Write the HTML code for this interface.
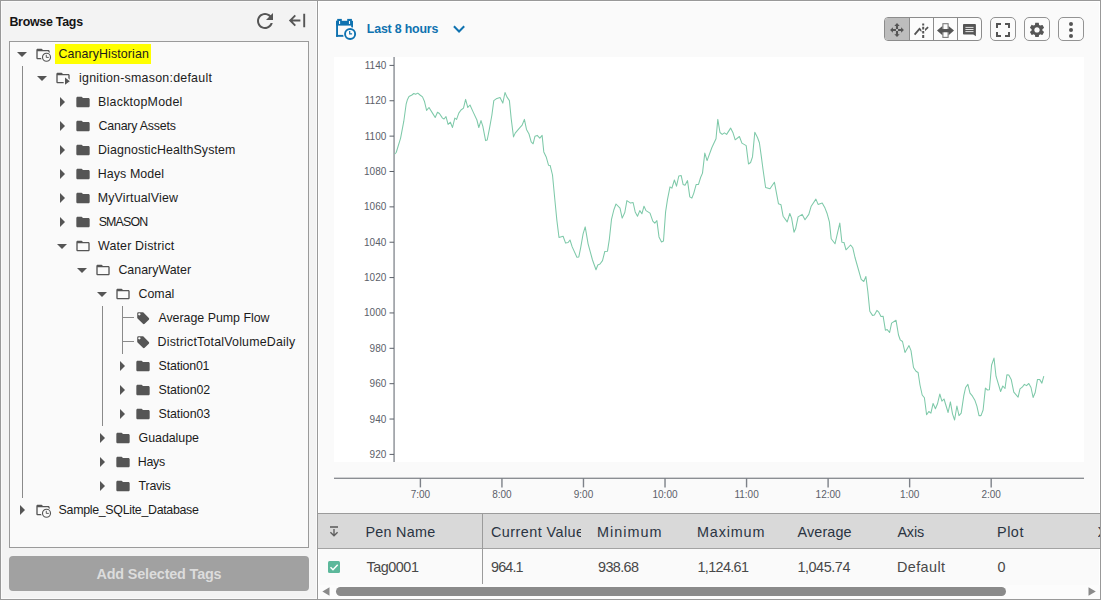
<!DOCTYPE html>
<html><head><meta charset="utf-8"><title>Browse Tags</title>
<style>
html,body{margin:0;padding:0;}
body{width:1101px;height:600px;position:relative;overflow:hidden;background:#999;font-family:"Liberation Sans", sans-serif;}
.t{position:absolute;white-space:pre;}
svg{display:block;overflow:visible}
</style></head><body>
<div style="position:absolute;left:1px;top:1px;width:314px;height:596px;background:#f3f3f3;border:1px solid #fafafa"></div>
<div class="t" style="left:9.40px;top:12px;height:20px;line-height:20px;font-size:12.4px;font-weight:700;color:#141414;letter-spacing:-0.251px;">Browse Tags</div>
<svg style="position:absolute;left:253px;top:9px" width="24" height="24" viewBox="0 0 24 24" ><path d="M17.650 6.350C16.200 4.900 14.210 4 12 4c-4.420 0-7.990 3.580-7.990 8s3.570 8 7.990 8c3.730 0 6.840-2.550 7.730-6h-2.080c-.82 2.330-3.040 4-5.650 4-3.310 0-6-2.690-6-6s2.690-6 6-6c1.660 0 3.140.69 4.220 1.780L13 11h7V4l-2.350 2.350z" fill="#555"/></svg>
<svg style="position:absolute;left:286.3px;top:9.4px" width="23" height="23" viewBox="0 0 24 24" ><path d="M15 11H6.830l3.580-3.590L9 6l-6 6 6 6 1.410-1.410L6.830 13H15v-2z M18 5h2v14h-2z" fill="#555"/></svg>
<div style="position:absolute;left:9px;top:41px;width:298px;height:505px;background:#fafafa;border:1px solid #9a9a9a"></div>
<div style="position:absolute;left:22px;top:66px;width:1px;height:432px;background:#8a8a8a"></div>
<div style="position:absolute;left:102px;top:306px;width:1px;height:120px;background:#8a8a8a"></div>
<div style="position:absolute;left:122px;top:306px;width:1px;height:48px;background:#8a8a8a"></div>
<div style="position:absolute;left:122px;top:317px;width:12px;height:1px;background:#8a8a8a"></div>
<div style="position:absolute;left:122px;top:341px;width:12px;height:1px;background:#8a8a8a"></div>
<svg style="position:absolute;left:10px;top:41.6px" width="24" height="24" viewBox="0 0 24 24" ><path d="M7 10l5 5 5-5z" fill="#555"/></svg>
<svg style="position:absolute;left:35px;top:46px" width="16" height="16" viewBox="0 0 24 24" ><path d="M20 6h-8l-2-2H4c-1.100 0-1.990.9-1.990 2L2 18c0 1.100.9 2 2 2h16c1.100 0 2-.9 2-2V8c0-1.100-.9-2-2-2zm0 12H4V8h16v10z" fill="#555"/><circle cx="17.250" cy="16.800" r="8.300" fill="#fafafa"/><circle cx="17.250" cy="16.800" r="6" fill="#fafafa" stroke="#555" stroke-width="1.700"/><path d="M16.900 13.200v3.900h3.800" fill="none" stroke="#555" stroke-width="1.450"/></svg>
<div style="position:absolute;left:55px;top:44px;width:96px;height:19.500px;background:#ffff00"></div>
<div class="t" style="left:58.40px;top:42px;height:24px;line-height:24px;font-size:12.4px;font-weight:400;color:#1c1c1c;letter-spacing:0.118px;">CanaryHistorian</div>
<svg style="position:absolute;left:30px;top:65.6px" width="24" height="24" viewBox="0 0 24 24" ><path d="M7 10l5 5 5-5z" fill="#555"/></svg>
<svg style="position:absolute;left:55px;top:70px" width="16" height="16" viewBox="0 0 24 24" ><path d="M20 6h-8l-2-2H4c-1.100 0-1.990.9-1.990 2L2 18c0 1.100.9 2 2 2h16c1.100 0 2-.9 2-2V8c0-1.100-.9-2-2-2zm0 12H4V8h16v10z" fill="#555"/><path d="M15 11.400v10.800l7.200-5.400z" fill="#fafafa" stroke="#fafafa" stroke-width="4" stroke-linejoin="round"/><path d="M15 11.400v10.800l7.200-5.400z" fill="#555"/></svg>
<div class="t" style="left:79.00px;top:66px;height:24px;line-height:24px;font-size:12.4px;font-weight:400;color:#1c1c1c;letter-spacing:0.246px;">ignition-smason:default</div>
<svg style="position:absolute;left:49.5px;top:90px" width="24" height="24" viewBox="0 0 24 24" ><path d="M10 17l5-5-5-5v10z" fill="#555"/></svg>
<svg style="position:absolute;left:75px;top:94px" width="16" height="16" viewBox="0 0 24 24" ><path d="M10 4H4c-1.1 0-1.99.9-1.99 2L2 18c0 1.100.9 2 2 2h16c1.100 0 2-.9 2-2V8c0-1.100-.9-2-2-2h-8l-2-2z" fill="#555"/></svg>
<div class="t" style="left:98.00px;top:90px;height:24px;line-height:24px;font-size:12.4px;font-weight:400;color:#1c1c1c;letter-spacing:0.257px;">BlacktopModel</div>
<svg style="position:absolute;left:49.5px;top:114px" width="24" height="24" viewBox="0 0 24 24" ><path d="M10 17l5-5-5-5v10z" fill="#555"/></svg>
<svg style="position:absolute;left:75px;top:118px" width="16" height="16" viewBox="0 0 24 24" ><path d="M10 4H4c-1.1 0-1.99.9-1.99 2L2 18c0 1.100.9 2 2 2h16c1.100 0 2-.9 2-2V8c0-1.100-.9-2-2-2h-8l-2-2z" fill="#555"/></svg>
<div class="t" style="left:98.60px;top:114px;height:24px;line-height:24px;font-size:12.4px;font-weight:400;color:#1c1c1c;letter-spacing:-0.215px;">Canary Assets</div>
<svg style="position:absolute;left:49.5px;top:138px" width="24" height="24" viewBox="0 0 24 24" ><path d="M10 17l5-5-5-5v10z" fill="#555"/></svg>
<svg style="position:absolute;left:75px;top:142px" width="16" height="16" viewBox="0 0 24 24" ><path d="M10 4H4c-1.1 0-1.99.9-1.99 2L2 18c0 1.100.9 2 2 2h16c1.100 0 2-.9 2-2V8c0-1.100-.9-2-2-2h-8l-2-2z" fill="#555"/></svg>
<div class="t" style="left:98.00px;top:138px;height:24px;line-height:24px;font-size:12.4px;font-weight:400;color:#1c1c1c;letter-spacing:0.112px;">DiagnosticHealthSystem</div>
<svg style="position:absolute;left:49.5px;top:162px" width="24" height="24" viewBox="0 0 24 24" ><path d="M10 17l5-5-5-5v10z" fill="#555"/></svg>
<svg style="position:absolute;left:75px;top:166px" width="16" height="16" viewBox="0 0 24 24" ><path d="M10 4H4c-1.1 0-1.99.9-1.99 2L2 18c0 1.100.9 2 2 2h16c1.100 0 2-.9 2-2V8c0-1.100-.9-2-2-2h-8l-2-2z" fill="#555"/></svg>
<div class="t" style="left:97.70px;top:162px;height:24px;line-height:24px;font-size:12.4px;font-weight:400;color:#1c1c1c;letter-spacing:0.104px;">Hays Model</div>
<svg style="position:absolute;left:49.5px;top:186px" width="24" height="24" viewBox="0 0 24 24" ><path d="M10 17l5-5-5-5v10z" fill="#555"/></svg>
<svg style="position:absolute;left:75px;top:190px" width="16" height="16" viewBox="0 0 24 24" ><path d="M10 4H4c-1.1 0-1.99.9-1.99 2L2 18c0 1.100.9 2 2 2h16c1.100 0 2-.9 2-2V8c0-1.100-.9-2-2-2h-8l-2-2z" fill="#555"/></svg>
<div class="t" style="left:97.70px;top:186px;height:24px;line-height:24px;font-size:12.4px;font-weight:400;color:#1c1c1c;letter-spacing:0.183px;">MyVirtualView</div>
<svg style="position:absolute;left:49.5px;top:210px" width="24" height="24" viewBox="0 0 24 24" ><path d="M10 17l5-5-5-5v10z" fill="#555"/></svg>
<svg style="position:absolute;left:75px;top:214px" width="16" height="16" viewBox="0 0 24 24" ><path d="M10 4H4c-1.1 0-1.99.9-1.99 2L2 18c0 1.100.9 2 2 2h16c1.100 0 2-.9 2-2V8c0-1.100-.9-2-2-2h-8l-2-2z" fill="#555"/></svg>
<div class="t" style="left:98.70px;top:210px;height:24px;line-height:24px;font-size:12.4px;font-weight:400;color:#1c1c1c;letter-spacing:-0.851px;">SMASON</div>
<svg style="position:absolute;left:50px;top:233.6px" width="24" height="24" viewBox="0 0 24 24" ><path d="M7 10l5 5 5-5z" fill="#555"/></svg>
<svg style="position:absolute;left:75px;top:238px" width="16" height="16" viewBox="0 0 24 24" ><path d="M20 6h-8l-2-2H4c-1.100 0-1.990.9-1.990 2L2 18c0 1.100.9 2 2 2h16c1.100 0 2-.9 2-2V8c0-1.100-.9-2-2-2zm0 12H4V8h16v10z" fill="#555"/></svg>
<div class="t" style="left:98.00px;top:234px;height:24px;line-height:24px;font-size:12.4px;font-weight:400;color:#1c1c1c;letter-spacing:0.181px;">Water District</div>
<svg style="position:absolute;left:70px;top:257.6px" width="24" height="24" viewBox="0 0 24 24" ><path d="M7 10l5 5 5-5z" fill="#555"/></svg>
<svg style="position:absolute;left:95px;top:262px" width="16" height="16" viewBox="0 0 24 24" ><path d="M20 6h-8l-2-2H4c-1.100 0-1.990.9-1.990 2L2 18c0 1.100.9 2 2 2h16c1.100 0 2-.9 2-2V8c0-1.100-.9-2-2-2zm0 12H4V8h16v10z" fill="#555"/></svg>
<div class="t" style="left:118.40px;top:258px;height:24px;line-height:24px;font-size:12.4px;font-weight:400;color:#1c1c1c;letter-spacing:0.010px;">CanaryWater</div>
<svg style="position:absolute;left:90px;top:281.6px" width="24" height="24" viewBox="0 0 24 24" ><path d="M7 10l5 5 5-5z" fill="#555"/></svg>
<svg style="position:absolute;left:115px;top:286px" width="16" height="16" viewBox="0 0 24 24" ><path d="M20 6h-8l-2-2H4c-1.100 0-1.990.9-1.990 2L2 18c0 1.100.9 2 2 2h16c1.100 0 2-.9 2-2V8c0-1.100-.9-2-2-2zm0 12H4V8h16v10z" fill="#555"/></svg>
<div class="t" style="left:138.40px;top:282px;height:24px;line-height:24px;font-size:12.4px;font-weight:400;color:#1c1c1c;letter-spacing:0.037px;">Comal</div>
<svg style="position:absolute;left:136px;top:311.2px" width="14.4" height="14.4" viewBox="0 0 24 24" ><path d="M21.410 11.580l-9-9C12.050 2.220 11.550 2 11 2H4c-1.100 0-2 .9-2 2v7c0 .550.220 1.050.590 1.420l9 9c.360.360.860.580 1.410.580.550 0 1.050-.220 1.410-.590l7-7c.370-.360.590-.860.590-1.410 0-.550-.230-1.060-.590-1.420zM5.600 7.600C4.500 7.600 3.600 6.700 3.600 5.600S4.500 3.600 5.600 3.600 7.600 4.500 7.600 5.600 6.700 7.600 5.600 7.600z" fill="#555"/></svg>
<div class="t" style="left:158.40px;top:306px;height:24px;line-height:24px;font-size:12.4px;font-weight:400;color:#1c1c1c;letter-spacing:-0.012px;">Average Pump Flow</div>
<svg style="position:absolute;left:136px;top:335.2px" width="14.4" height="14.4" viewBox="0 0 24 24" ><path d="M21.410 11.580l-9-9C12.050 2.220 11.550 2 11 2H4c-1.100 0-2 .9-2 2v7c0 .550.220 1.050.590 1.420l9 9c.360.360.860.580 1.410.580.550 0 1.050-.220 1.410-.590l7-7c.370-.360.590-.860.590-1.410 0-.550-.230-1.060-.590-1.420zM5.600 7.600C4.500 7.600 3.600 6.700 3.600 5.600S4.500 3.600 5.600 3.600 7.600 4.500 7.600 5.600 6.700 7.600 5.600 7.600z" fill="#555"/></svg>
<div class="t" style="left:157.60px;top:330px;height:24px;line-height:24px;font-size:12.4px;font-weight:400;color:#1c1c1c;letter-spacing:0.204px;">DistrictTotalVolumeDaily</div>
<svg style="position:absolute;left:109.5px;top:354px" width="24" height="24" viewBox="0 0 24 24" ><path d="M10 17l5-5-5-5v10z" fill="#555"/></svg>
<svg style="position:absolute;left:135px;top:358px" width="16" height="16" viewBox="0 0 24 24" ><path d="M10 4H4c-1.1 0-1.99.9-1.99 2L2 18c0 1.100.9 2 2 2h16c1.100 0 2-.9 2-2V8c0-1.100-.9-2-2-2h-8l-2-2z" fill="#555"/></svg>
<div class="t" style="left:158.60px;top:354px;height:24px;line-height:24px;font-size:12.4px;font-weight:400;color:#1c1c1c;letter-spacing:-0.183px;">Station01</div>
<svg style="position:absolute;left:109.5px;top:378px" width="24" height="24" viewBox="0 0 24 24" ><path d="M10 17l5-5-5-5v10z" fill="#555"/></svg>
<svg style="position:absolute;left:135px;top:382px" width="16" height="16" viewBox="0 0 24 24" ><path d="M10 4H4c-1.1 0-1.99.9-1.99 2L2 18c0 1.100.9 2 2 2h16c1.100 0 2-.9 2-2V8c0-1.100-.9-2-2-2h-8l-2-2z" fill="#555"/></svg>
<div class="t" style="left:158.60px;top:378px;height:24px;line-height:24px;font-size:12.4px;font-weight:400;color:#1c1c1c;letter-spacing:-0.108px;">Station02</div>
<svg style="position:absolute;left:109.5px;top:402px" width="24" height="24" viewBox="0 0 24 24" ><path d="M10 17l5-5-5-5v10z" fill="#555"/></svg>
<svg style="position:absolute;left:135px;top:406px" width="16" height="16" viewBox="0 0 24 24" ><path d="M10 4H4c-1.1 0-1.99.9-1.99 2L2 18c0 1.100.9 2 2 2h16c1.100 0 2-.9 2-2V8c0-1.100-.9-2-2-2h-8l-2-2z" fill="#555"/></svg>
<div class="t" style="left:158.60px;top:402px;height:24px;line-height:24px;font-size:12.4px;font-weight:400;color:#1c1c1c;letter-spacing:-0.108px;">Station03</div>
<svg style="position:absolute;left:89.5px;top:426px" width="24" height="24" viewBox="0 0 24 24" ><path d="M10 17l5-5-5-5v10z" fill="#555"/></svg>
<svg style="position:absolute;left:115px;top:430px" width="16" height="16" viewBox="0 0 24 24" ><path d="M10 4H4c-1.1 0-1.99.9-1.99 2L2 18c0 1.100.9 2 2 2h16c1.100 0 2-.9 2-2V8c0-1.100-.9-2-2-2h-8l-2-2z" fill="#555"/></svg>
<div class="t" style="left:138.60px;top:426px;height:24px;line-height:24px;font-size:12.4px;font-weight:400;color:#1c1c1c;letter-spacing:-0.042px;">Guadalupe</div>
<svg style="position:absolute;left:89.5px;top:450px" width="24" height="24" viewBox="0 0 24 24" ><path d="M10 17l5-5-5-5v10z" fill="#555"/></svg>
<svg style="position:absolute;left:115px;top:454px" width="16" height="16" viewBox="0 0 24 24" ><path d="M10 4H4c-1.1 0-1.99.9-1.99 2L2 18c0 1.100.9 2 2 2h16c1.100 0 2-.9 2-2V8c0-1.100-.9-2-2-2h-8l-2-2z" fill="#555"/></svg>
<div class="t" style="left:137.80px;top:450px;height:24px;line-height:24px;font-size:12.4px;font-weight:400;color:#1c1c1c;letter-spacing:-0.278px;">Hays</div>
<svg style="position:absolute;left:89.5px;top:474px" width="24" height="24" viewBox="0 0 24 24" ><path d="M10 17l5-5-5-5v10z" fill="#555"/></svg>
<svg style="position:absolute;left:115px;top:478px" width="16" height="16" viewBox="0 0 24 24" ><path d="M10 4H4c-1.1 0-1.99.9-1.99 2L2 18c0 1.100.9 2 2 2h16c1.100 0 2-.9 2-2V8c0-1.100-.9-2-2-2h-8l-2-2z" fill="#555"/></svg>
<div class="t" style="left:138.60px;top:474px;height:24px;line-height:24px;font-size:12.4px;font-weight:400;color:#1c1c1c;letter-spacing:-0.215px;">Travis</div>
<svg style="position:absolute;left:9.5px;top:498px" width="24" height="24" viewBox="0 0 24 24" ><path d="M10 17l5-5-5-5v10z" fill="#555"/></svg>
<svg style="position:absolute;left:35px;top:502px" width="16" height="16" viewBox="0 0 24 24" ><path d="M20 6h-8l-2-2H4c-1.100 0-1.990.9-1.990 2L2 18c0 1.100.9 2 2 2h16c1.100 0 2-.9 2-2V8c0-1.100-.9-2-2-2zm0 12H4V8h16v10z" fill="#555"/><circle cx="17.250" cy="16.800" r="8.300" fill="#fafafa"/><circle cx="17.250" cy="16.800" r="6" fill="#fafafa" stroke="#555" stroke-width="1.700"/><path d="M16.900 13.200v3.900h3.800" fill="none" stroke="#555" stroke-width="1.450"/></svg>
<div class="t" style="left:58.60px;top:498px;height:24px;line-height:24px;font-size:12.4px;font-weight:400;color:#1c1c1c;letter-spacing:-0.306px;">Sample_SQLite_Database</div>
<div style="position:absolute;left:9px;top:556px;width:300px;height:35px;background:#a1a1a1;border-radius:4px"></div>
<div class="t" style="left:96.50px;top:557px;height:35px;line-height:35px;font-size:14.4px;font-weight:700;color:#dcdcdc;letter-spacing:-0.161px;">Add Selected Tags</div>
<div style="position:absolute;left:318px;top:1px;width:780px;height:596px;background:#fafafa;border:1px solid #fff"></div>
<svg style="position:absolute;left:330px;top:12px" width="40" height="32" viewBox="330 12 40 32" ><rect x="336.100" y="20.800" width="1.900" height="16" fill="#0f72b0"/><rect x="336.100" y="34.900" width="9" height="1.900" fill="#0f72b0"/><rect x="336.100" y="20.800" width="16.900" height="4.800" fill="#0f72b0"/><rect x="351.200" y="24" width="1.800" height="6" fill="#0f72b0"/><rect x="337.200" y="18.900" width="4.600" height="3" fill="#0f72b0"/><rect x="347.200" y="18.900" width="4.700" height="3" fill="#0f72b0"/><rect x="339" y="21" width="1.100" height="3" fill="#fafafa"/><rect x="348.950" y="21" width="1.100" height="3" fill="#fafafa"/><circle cx="350.100" cy="34" r="7.100" fill="#fafafa"/><circle cx="350.100" cy="34" r="5.050" fill="#fdfdfd" stroke="#0f72b0" stroke-width="1.900"/><path d="M349.700 30.900V33.850H352.100" fill="none" stroke="#0f72b0" stroke-width="1.200"/></svg>
<div class="t" style="left:366.80px;top:18px;height:22px;line-height:22px;font-size:12.4px;font-weight:700;color:#0f72b0;letter-spacing:-0.189px;">Last 8 hours</div>
<svg style="position:absolute;left:450px;top:22px" width="18" height="14" viewBox="450 22 18 14" ><path d="M453.900 26.300L459.050 31.500L464.200 26.300" fill="none" stroke="#0f72b0" stroke-width="2"/></svg>
<div style="position:absolute;left:884px;top:17px;width:96px;height:22px;border:1px solid #8c8c8c;border-radius:4px;background:#fcfcfc;overflow:hidden"><div style="position:absolute;left:0;top:0;width:24px;height:22px;background:#bdbdbd"></div><div style="position:absolute;left:24px;top:0;width:1px;height:22px;background:#8c8c8c"></div><div style="position:absolute;left:48px;top:0;width:1px;height:22px;background:#8c8c8c"></div><div style="position:absolute;left:72px;top:0;width:1px;height:22px;background:#8c8c8c"></div></div>
<div style="position:absolute;left:990px;top:17px;width:24px;height:22px;border:1px solid #939393;border-radius:5px;background:#fbfbfb"></div>
<div style="position:absolute;left:1024px;top:17px;width:24px;height:22px;border:1px solid #939393;border-radius:5px;background:#fbfbfb"></div>
<div style="position:absolute;left:1058px;top:17px;width:24px;height:22px;border:1px solid #939393;border-radius:5px;background:#fbfbfb"></div>
<svg style="position:absolute;left:880px;top:12px" width="210" height="34" viewBox="880 12 210 34" ><path d="M895.950 25v10.100h2.100V25zM892 28.950h10.100v2.100H892z" fill="#555"/><path d="M897 23.100l2.700 2.800h-5.400zM897 36.950l2.700-2.800h-5.400zM890.100 30l2.800-2.700v5.400zM903.900 30l-2.800-2.700v5.400z" fill="#555"/><path d="M914.600 34.600L919.500 28.800L922.800 32.100L928.100 27.200" fill="none" stroke="#555" stroke-width="1.800"/><path d="M923.200 23v15.200" stroke="#fcfcfc" stroke-width="3.600"/><path d="M923.200 23.400v2.200M923.200 26.800v2.700M923.200 30.900v2.600M923.200 35v2.900" stroke="#555" stroke-width="2"/><rect x="942.900" y="23.700" width="5.200" height="13.700" fill="#fcfcfc" stroke="#7a7a7a" stroke-width="1.100"/><path d="M937 30.600L942.400 26V29.100H948.600V26L954 30.600L948.600 35.300V32.200H942.400V35.300z" fill="#555"/><path d="M963.800 24.100h11.300a.8.800 0 0 1 .8.800V36.300l-2.600-1.700H963.800a.8.800 0 0 1-.8-.8V24.900a.8.800 0 0 1 .8-.8z" fill="#555"/><path d="M965.400 27.400h8.100M965.400 29.500h8.100M965.400 31.600h8.100" stroke="#f4f4f4" stroke-width=".9"/><path transform="translate(991 18)" d="M7 14H5v5h5v-2H7v-3zm-2-4h2V7h3V5H5v5zm12 7h-3v2h5v-5h-2v3zM14 5v2h3v3h2V5h-5z" fill="#555"/><path transform="translate(1028 20.900) scale(.75)" d="M19.140 12.940c.04-.3.060-.61.060-.94 0-.32-.02-.64-.07-.94l2.030-1.580c.18-.14.23-.41.120-.61l-1.920-3.320c-.12-.22-.37-.29-.59-.22l-2.390.96c-.5-.38-1.030-.7-1.620-.94l-.36-2.540c-.04-.24-.24-.41-.48-.41h-3.840c-.24 0-.43.170-.47.410l-.36 2.540c-.59.240-1.130.570-1.620.940l-2.390-.96c-.22-.08-.47 0-.59.220L2.740 8.870c-.12.210-.08.470.12.610l2.030 1.580c-.05.300-.09.630-.09.940s.02.640.07.940l-2.030 1.580c-.18.140-.23.410-.12.610l1.920 3.320c.12.220.37.290.59.220l2.390-.96c.5.380 1.030.7 1.620.94l.36 2.540c.05.240.24.410.48.410h3.840c.24 0 .44-.17.470-.41l.36-2.540c.59-.24 1.130-.56 1.620-.94l2.390.96c.22.080.47 0 .59-.22l1.920-3.320c.12-.22.070-.47-.12-.61l-2.010-1.580zM12 15.600c-1.980 0-3.600-1.620-3.600-3.600s1.620-3.600 3.600-3.600 3.600 1.620 3.600 3.600-1.620 3.600-3.600 3.600z" fill="#555"/><circle cx="1071" cy="23.900" r="2" fill="#555"/><circle cx="1071" cy="29.950" r="2" fill="#555"/><circle cx="1071" cy="36" r="2" fill="#555"/></svg>
<svg style="position:absolute;left:318px;top:1px" width="781" height="512" viewBox="318 1 781 512">
<rect x="334" y="57" width="750" height="405" fill="#fff"/>
<rect x="393.200" y="57" width="1.800" height="405" fill="#a4a7ac"/>
<path d="M389.500 65.40H394" stroke="#5b6069" stroke-width="1"/>
<text x="386.300" y="69" text-anchor="end" font-family="Liberation Sans, sans-serif" font-size="10" fill="#5b6069">1140</text>
<path d="M389.500 100.76H394" stroke="#5b6069" stroke-width="1"/>
<text x="386.300" y="104" text-anchor="end" font-family="Liberation Sans, sans-serif" font-size="10" fill="#5b6069">1120</text>
<path d="M389.500 136.13H394" stroke="#5b6069" stroke-width="1"/>
<text x="386.300" y="140" text-anchor="end" font-family="Liberation Sans, sans-serif" font-size="10" fill="#5b6069">1100</text>
<path d="M389.500 171.49H394" stroke="#5b6069" stroke-width="1"/>
<text x="386.300" y="175" text-anchor="end" font-family="Liberation Sans, sans-serif" font-size="10" fill="#5b6069">1080</text>
<path d="M389.500 206.86H394" stroke="#5b6069" stroke-width="1"/>
<text x="386.300" y="210" text-anchor="end" font-family="Liberation Sans, sans-serif" font-size="10" fill="#5b6069">1060</text>
<path d="M389.500 242.22H394" stroke="#5b6069" stroke-width="1"/>
<text x="386.300" y="246" text-anchor="end" font-family="Liberation Sans, sans-serif" font-size="10" fill="#5b6069">1040</text>
<path d="M389.500 277.58H394" stroke="#5b6069" stroke-width="1"/>
<text x="386.300" y="281" text-anchor="end" font-family="Liberation Sans, sans-serif" font-size="10" fill="#5b6069">1020</text>
<path d="M389.500 312.95H394" stroke="#5b6069" stroke-width="1"/>
<text x="386.300" y="316" text-anchor="end" font-family="Liberation Sans, sans-serif" font-size="10" fill="#5b6069">1000</text>
<path d="M389.500 348.31H394" stroke="#5b6069" stroke-width="1"/>
<text x="386.300" y="352" text-anchor="end" font-family="Liberation Sans, sans-serif" font-size="10" fill="#5b6069">980</text>
<path d="M389.500 383.68H394" stroke="#5b6069" stroke-width="1"/>
<text x="386.300" y="387" text-anchor="end" font-family="Liberation Sans, sans-serif" font-size="10" fill="#5b6069">960</text>
<path d="M389.500 419.04H394" stroke="#5b6069" stroke-width="1"/>
<text x="386.300" y="423" text-anchor="end" font-family="Liberation Sans, sans-serif" font-size="10" fill="#5b6069">940</text>
<path d="M389.500 454.40H394" stroke="#5b6069" stroke-width="1"/>
<text x="386.300" y="458" text-anchor="end" font-family="Liberation Sans, sans-serif" font-size="10" fill="#5b6069">920</text>
<rect x="334" y="477.700" width="750" height="1.100" fill="#70747b"/>
<path d="M420.40 478v9.400" stroke="#7d8188" stroke-width="1.400"/>
<text x="420.40" y="498" text-anchor="middle" font-family="Liberation Sans, sans-serif" font-size="10" fill="#5b6069">7:00</text>
<path d="M501.94 478v9.400" stroke="#7d8188" stroke-width="1.400"/>
<text x="501.94" y="498" text-anchor="middle" font-family="Liberation Sans, sans-serif" font-size="10" fill="#5b6069">8:00</text>
<path d="M583.48 478v9.400" stroke="#7d8188" stroke-width="1.400"/>
<text x="583.48" y="498" text-anchor="middle" font-family="Liberation Sans, sans-serif" font-size="10" fill="#5b6069">9:00</text>
<path d="M665.02 478v9.400" stroke="#7d8188" stroke-width="1.400"/>
<text x="665.02" y="498" text-anchor="middle" font-family="Liberation Sans, sans-serif" font-size="10" fill="#5b6069">10:00</text>
<path d="M746.56 478v9.400" stroke="#7d8188" stroke-width="1.400"/>
<text x="746.56" y="498" text-anchor="middle" font-family="Liberation Sans, sans-serif" font-size="10" fill="#5b6069">11:00</text>
<path d="M828.10 478v9.400" stroke="#7d8188" stroke-width="1.400"/>
<text x="828.10" y="498" text-anchor="middle" font-family="Liberation Sans, sans-serif" font-size="10" fill="#5b6069">12:00</text>
<path d="M909.64 478v9.400" stroke="#7d8188" stroke-width="1.400"/>
<text x="909.64" y="498" text-anchor="middle" font-family="Liberation Sans, sans-serif" font-size="10" fill="#5b6069">1:00</text>
<path d="M991.18 478v9.400" stroke="#7d8188" stroke-width="1.400"/>
<text x="991.18" y="498" text-anchor="middle" font-family="Liberation Sans, sans-serif" font-size="10" fill="#5b6069">2:00</text>
<polyline points="394.8,154.0 396.2,152.5 400.6,138.1 403.8,121.2 406.2,103.8 407.5,99.4 409.0,96.5 411.9,95.0 413.8,93.5 415.6,94.2 417.8,93.1 420.0,95.0 422.5,96.9 424.4,101.2 426.6,110.4 429.0,107.5 432.5,113.1 435.2,117.5 437.5,112.2 439.4,113.5 442.5,118.1 444.0,119.0 446.0,116.6 448.1,124.4 450.4,122.2 452.5,127.5 454.8,118.1 456.6,119.4 458.8,113.1 461.0,110.0 463.5,108.1 465.6,99.4 467.8,107.5 470.0,105.0 473.1,111.9 476.9,120.0 478.8,127.5 481.0,120.6 482.8,126.2 485.6,140.6 487.2,140.0 489.4,128.8 491.9,115.0 493.8,100.6 496.2,98.8 500.0,97.5 502.8,103.1 505.0,92.5 506.9,96.9 509.4,100.6 511.2,118.8 513.5,136.9 515.2,133.1 518.8,128.8 522.1,125.2 524.4,119.4 526.5,129.4 529.0,134.0 531.2,141.9 533.1,143.8 535.0,136.2 537.2,135.4 539.8,138.1 542.1,135.4 543.8,151.9 546.2,156.9 548.5,165.2 550.2,165.6 552.5,175.0 555.0,201.2 556.9,220.6 559.0,237.5 563.1,236.2 565.6,243.1 568.1,242.5 570.0,240.0 572.2,246.9 576.9,257.2 578.8,256.9 580.6,248.1 583.1,233.8 585.2,226.9 588.1,243.8 592.5,260.0 596.0,269.8 597.8,265.0 600.0,264.0 602.5,260.6 604.8,251.5 607.5,251.2 609.4,238.8 611.5,219.4 613.8,210.0 616.0,204.0 620.0,208.1 622.2,218.1 624.8,212.5 626.9,200.6 630.6,203.1 633.1,202.5 635.2,211.9 637.5,216.2 639.8,210.6 641.9,213.8 644.0,206.2 646.0,210.6 650.0,213.1 652.8,221.2 654.8,223.1 656.9,220.6 659.0,236.9 661.5,241.9 663.5,241.0 665.6,211.9 667.5,199.4 670.0,186.9 671.9,188.1 674.4,180.0 676.5,186.2 678.8,176.0 681.2,175.6 683.1,184.4 685.0,185.2 687.5,180.6 689.8,196.9 691.9,198.1 693.8,193.1 696.2,184.4 698.5,184.4 700.6,177.5 702.5,173.1 704.8,153.1 707.1,160.6 711.9,147.5 716.0,138.8 717.8,119.4 720.0,132.5 722.2,134.4 724.4,132.8 726.6,134.4 730.6,128.1 733.1,133.1 735.2,139.8 739.4,136.5 741.9,143.1 746.2,145.6 748.5,164.0 750.6,162.5 752.5,156.9 754.8,132.2 757.5,137.5 759.4,142.8 761.2,155.6 763.1,170.0 765.6,187.5 770.0,188.8 774.4,182.2 778.5,203.8 781.0,204.8 783.1,216.2 787.2,221.9 789.8,213.5 791.6,218.1 794.0,232.2 795.6,228.8 798.1,216.9 802.2,214.4 805.0,219.8 808.8,214.4 811.2,206.2 815.9,199.1 818.1,204.4 822.2,203.1 825.0,208.1 827.2,213.8 829.4,221.9 831.2,238.8 835.0,243.8 839.8,223.1 841.9,242.2 844.0,242.5 846.0,249.8 850.6,245.0 852.8,247.8 855.0,257.5 861.2,279.4 863.8,281.5 865.9,276.5 867.8,291.2 869.8,311.2 872.5,315.4 874.4,315.0 876.9,310.4 878.8,312.2 881.0,316.5 883.1,316.2 885.4,330.2 887.2,329.6 889.6,332.5 891.6,323.1 896.0,320.2 898.5,335.0 900.2,339.8 902.5,341.5 905.0,352.5 909.0,345.6 911.0,350.6 913.5,367.5 916.0,371.2 918.1,372.5 920.0,385.0 922.2,395.0 924.4,397.8 926.6,414.8 928.8,411.5 930.9,413.1 933.1,403.4 935.4,408.8 937.5,403.8 939.8,394.0 941.9,401.2 944.0,399.0 948.1,412.5 950.4,401.9 952.5,413.8 954.6,420.0 956.9,406.0 959.0,415.6 961.2,413.1 963.8,395.6 965.6,387.5 967.9,384.4 970.0,393.1 972.5,396.2 975.0,400.6 976.9,406.2 979.0,415.6 981.0,415.6 983.1,410.0 985.4,388.1 987.5,390.0 989.4,389.8 991.6,365.0 994.0,358.1 996.0,376.2 1000.6,391.5 1002.8,386.0 1005.0,388.5 1006.9,374.8 1008.8,375.0 1011.2,379.4 1013.8,392.2 1018.1,397.2 1020.0,388.8 1022.2,387.2 1024.4,384.4 1026.5,385.6 1028.8,383.5 1031.0,387.5 1033.1,397.5 1035.2,392.5 1037.5,379.4 1039.6,379.4 1041.9,383.1 1043.8,376.2" fill="none" stroke="#7ec9a9" stroke-width="1.050" stroke-linejoin="round"/>
</svg>
<div style="position:absolute;left:318px;top:513px;width:782px;height:34px;background:#d9d9d9;border-top:1px solid #9b9b9b;border-bottom:1px solid #a3a3a3;box-sizing:content-box"></div>
<div style="position:absolute;left:482px;top:514px;width:1px;height:70px;background:#9b9b9b"></div>
<svg style="position:absolute;left:326px;top:522px" width="16" height="18" viewBox="326 522 16 18" ><path d="M330 527h8" stroke="#606060" stroke-width="1.600"/><path d="M334 529v6.200M330.400 532.200l3.600 3.600 3.600-3.600" fill="none" stroke="#606060" stroke-width="1.400"/></svg>
<div class="t" style="left:365.50px;top:515px;height:35px;line-height:35px;font-size:14.4px;font-weight:400;color:#2a3442;letter-spacing:0.245px;">Pen Name</div>
<div class="t" style="left:366.50px;top:550px;height:35px;line-height:35px;font-size:14.4px;font-weight:400;color:#484848;letter-spacing:-0.469px;">Tag0001</div>
<div class="t" style="left:491.00px;top:515px;height:35px;line-height:35px;font-size:14.4px;font-weight:400;color:#2a3442;letter-spacing:0.440px;width:90px;overflow:hidden;">Current Value</div>
<div class="t" style="left:491.00px;top:550px;height:35px;line-height:35px;font-size:14.4px;font-weight:400;color:#484848;letter-spacing:-0.852px;">964.1</div>
<div class="t" style="left:597.00px;top:515px;height:35px;line-height:35px;font-size:14.4px;font-weight:400;color:#2a3442;letter-spacing:1.037px;">Minimum</div>
<div class="t" style="left:598.00px;top:550px;height:35px;line-height:35px;font-size:14.4px;font-weight:400;color:#484848;letter-spacing:-0.602px;">938.68</div>
<div class="t" style="left:697.00px;top:515px;height:35px;line-height:35px;font-size:14.4px;font-weight:400;color:#2a3442;letter-spacing:0.838px;">Maximum</div>
<div class="t" style="left:697.40px;top:550px;height:35px;line-height:35px;font-size:14.4px;font-weight:400;color:#484848;letter-spacing:-0.630px;">1,124.61</div>
<div class="t" style="left:797.60px;top:515px;height:35px;line-height:35px;font-size:14.4px;font-weight:400;color:#2a3442;letter-spacing:0.111px;">Average</div>
<div class="t" style="left:797.40px;top:550px;height:35px;line-height:35px;font-size:14.4px;font-weight:400;color:#484848;letter-spacing:-0.430px;">1,045.74</div>
<div class="t" style="left:897.40px;top:515px;height:35px;line-height:35px;font-size:14.4px;font-weight:400;color:#2a3442;letter-spacing:-0.130px;">Axis</div>
<div class="t" style="left:897.00px;top:550px;height:35px;line-height:35px;font-size:14.4px;font-weight:400;color:#484848;letter-spacing:0.400px;">Default</div>
<div class="t" style="left:997.00px;top:515px;height:35px;line-height:35px;font-size:14.4px;font-weight:400;color:#2a3442;letter-spacing:0.534px;">Plot</div>
<div class="t" style="left:997.60px;top:550px;height:35px;line-height:35px;font-size:14.4px;font-weight:400;color:#484848;letter-spacing:-1.200px;">0</div>
<div class="t" style="left:1097.5px;top:515px;height:35px;line-height:35px;font-size:14.4px;font-weight:400;color:#2a3442;letter-spacing:-1.391px;width:2px;overflow:hidden;">X</div>
<svg style="position:absolute;left:328px;top:561px" width="12" height="12" viewBox="0 0 12 12" ><rect width="12" height="12" rx="1.500" fill="#5cb89b"/><path d="M2.500 6.200l2.500 2.500 4.700-4.900" fill="none" stroke="#fff" stroke-width="1.500"/></svg>
<div style="position:absolute;left:318px;top:585px;width:782px;height:14px;background:#fcfcfc"></div>
<div style="position:absolute;left:336px;top:587px;width:670px;height:9px;background:#8a8a8a;border-radius:4.500px"></div>
<svg style="position:absolute;left:322px;top:586px" width="9" height="11" viewBox="0 0 9 11" ><path d="M7.500 1.200v8.600L.4 5.500z" fill="#8a8a8a"/></svg>
<svg style="position:absolute;left:1088px;top:586px" width="9" height="11" viewBox="0 0 9 11" ><path d="M.5 1.200v8.600l7.300-4.300z" fill="#8a8a8a"/></svg>
</body></html>
